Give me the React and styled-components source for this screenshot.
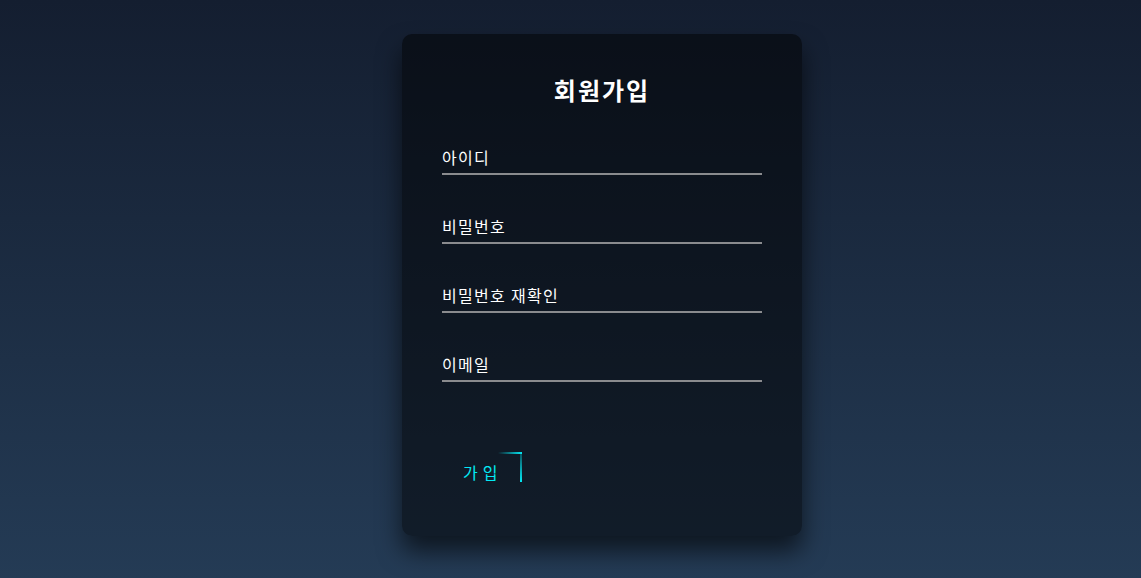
import React from 'react';
import styled, { createGlobalStyle } from 'styled-components';

const GlobalStyle = createGlobalStyle`
html, body {
  margin: 0;
  padding: 0;
  height: 100%;
}
body {
  background: linear-gradient(#141e30, #243b55);
  font-family: "Noto Sans CJK KR", "Noto Sans", sans-serif;
}
#root {
  height: 100%;
}
`

const Page = styled.div`
min-height: 100vh;
box-sizing: border-box;
padding: 34px 0 0 402px;
`

const Box = styled.div`
width: 400px;
height: 502px;
box-sizing: border-box;
padding: 40px;
background: rgba(0, 0, 0, 0.5);
border-radius: 10px;
box-shadow: 0 15px 25px rgba(0, 0, 0, 0.6);
`

const Title = styled.h2`
margin: 0 0 31px;
padding: 0;
color: #fff;
font-size: 24px;
line-height: 32px;
font-weight: 700;
letter-spacing: 2px;
text-align: center;
`

const Form = styled.form`
display: flex;
flex-direction: column;
`

const Field = styled.input`
width: 100%;
box-sizing: border-box;
height: 38px;
margin: 0 0 31px;
padding: 10px 0 6px;
font-family: inherit;
font-size: 16px;
line-height: 20px;
letter-spacing: 1.3px;
color: #fff;
background: transparent;
border: none;
border-bottom: 2px solid #8a8b8e;
outline: none;

&::placeholder {
  color: #fff;
  opacity: 1;
}
`

const Submit = styled.a`
position: relative;
align-self: flex-start;
display: inline-block;
width: 80px;
margin-top: 39px;
padding: 10px 0 10px 21px;
height: 40px;
box-sizing: border-box;
color: #03e9f4;
font-size: 16px;
line-height: 20px;
letter-spacing: 5px;
white-space: nowrap;
text-decoration: none;
overflow: hidden;
`

const TopEdge = styled.span`
position: absolute;
top: 0;
left: 0;
width: 100%;
height: 2px;
background: linear-gradient(90deg, transparent 70%, #03e9f4);
`

const RightEdge = styled.span`
position: absolute;
top: -25%;
right: 0;
width: 2px;
height: 100%;
background: linear-gradient(180deg, transparent, #03e9f4);
`

export default function App() {
  return (
    <Page>
      <GlobalStyle />
      <Box>
        <Title>회원가입</Title>
        <Form onSubmit={e => e.preventDefault()}>
          <Field type="text" placeholder="아이디" />
          <Field type="password" placeholder="비밀번호" />
          <Field type="password" placeholder="비밀번호 재확인" />
          <Field type="email" placeholder="이메일" />
          <Submit href="#">
            <TopEdge />
            <RightEdge />
            가입
          </Submit>
        </Form>
      </Box>
    </Page>
  )
}
